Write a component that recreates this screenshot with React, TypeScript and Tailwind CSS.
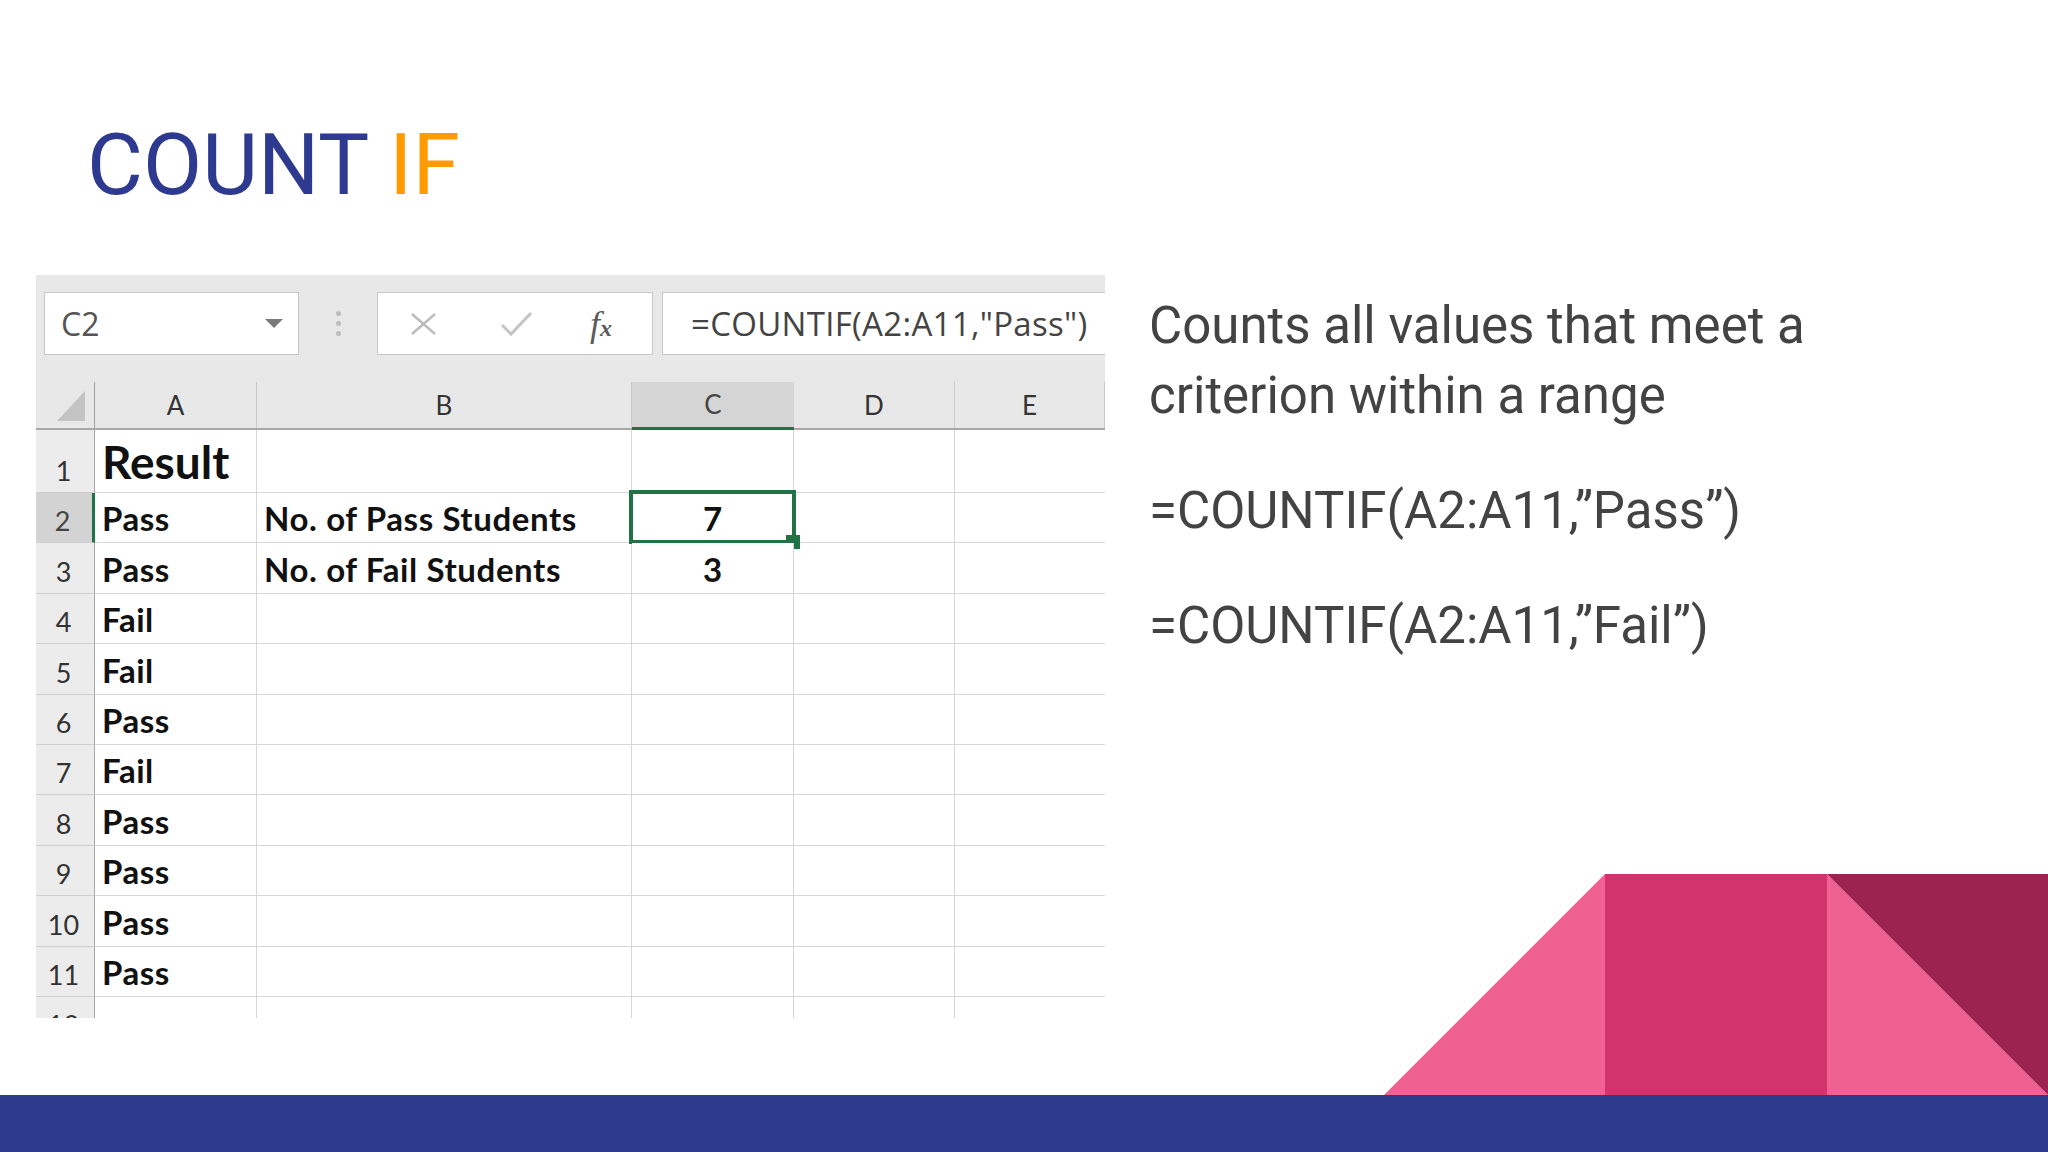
import React from 'react';

const rows = [
  { n: '1', a: 'Result', b: '', c: '', tall: true },
  { n: '2', a: 'Pass', b: 'No. of Pass Students', c: '7', sel: true },
  { n: '3', a: 'Pass', b: 'No. of Fail Students', c: '3' },
  { n: '4', a: 'Fail', b: '', c: '' },
  { n: '5', a: 'Fail', b: '', c: '' },
  { n: '6', a: 'Pass', b: '', c: '' },
  { n: '7', a: 'Fail', b: '', c: '' },
  { n: '8', a: 'Pass', b: '', c: '' },
  { n: '9', a: 'Pass', b: '', c: '' },
  { n: '10', a: 'Pass', b: '', c: '' },
  { n: '11', a: 'Pass', b: '', c: '' },
  { n: '12', a: '', b: '', c: '' },
];

const cols = 'grid grid-cols-[59px_162px_375px_162px_161px_150px]';

function Toolbar() {
  return (
    <div className="h-[107px] shrink-0 flex items-start pt-[17px] pl-[8px]">
      <div className="shrink-0 w-[255px] h-[63px] bg-white border border-[#c6c6c6] flex items-center justify-between pl-[16px] pr-[15px]">
        <span className="text-[32px] text-[#555] font-['Open_Sans',sans-serif] leading-none">C2</span>
        <svg width="18" height="9" viewBox="0 0 18 9">
          <polygon points="0,0 18,0 9,9" fill="#7a7a7a" />
        </svg>
      </div>
      <div className="shrink-0 w-[78px] h-[63px] flex flex-col items-center justify-center gap-[5px]">
        <div className="w-[5px] h-[5px] rounded-full bg-[#bdbdbd]" />
        <div className="w-[5px] h-[5px] rounded-full bg-[#bdbdbd]" />
        <div className="w-[5px] h-[5px] rounded-full bg-[#bdbdbd]" />
      </div>
      <div className="shrink-0 w-[276px] h-[63px] bg-white border border-[#c6c6c6] flex items-center pl-[32px]">
        <svg width="27" height="24" viewBox="0 0 27 24">
          <line x1="2" y1="2" x2="25" y2="22" stroke="#bcbcbc" strokeWidth="2.5" />
          <line x1="25" y1="2" x2="2" y2="22" stroke="#bcbcbc" strokeWidth="2.5" />
        </svg>
        <svg width="33" height="26" viewBox="0 0 33 26" className="ml-[63px]">
          <polyline points="2,14 11,23 31,2" fill="none" stroke="#c4c4c4" strokeWidth="3" />
        </svg>
        <span className="ml-[57px] font-['Liberation_Serif',serif] italic text-[#5a5a5a] text-[36px] leading-none">
          f<span className="text-[24px] font-semibold">x</span>
        </span>
      </div>
      <div className="shrink-0 ml-[9px] w-[470px] h-[63px] bg-white border border-[#c6c6c6] flex items-center pl-[28px]">
        <span className="text-[33px] tracking-[0.3px] text-[#444] font-['Open_Sans',sans-serif] leading-none whitespace-nowrap">
          =COUNTIF(A2:A11,"Pass")
        </span>
      </div>
    </div>
  );
}

function HeaderRow() {
  const letters = ['A', 'B', 'C', 'D', 'E'];
  return (
    <div className={`${cols} h-[48px] shrink-0 border-b-2 border-[#a8a8a8]`}>
      <div className="border-r border-[#a0a0a0] flex items-end justify-end pr-[9px] pb-[7px]">
        <svg width="28" height="30" viewBox="0 0 28 30">
          <polygon points="28,0 28,30 0,30" fill="#c4c4c4" />
        </svg>
      </div>
      {letters.map((l) => (
        <div
          key={l}
          className={
            l === 'C'
              ? 'bg-[#d5d5d5] border-b-[3px] -mb-[2px] border-[#217346] flex items-center justify-center text-[26px] text-[#444]'
              : 'border-r border-[#c9c9c9] flex items-center justify-center text-[26px] text-[#333]'
          }
        >
          {l}
        </div>
      ))}
    </div>
  );
}

function Sheet() {
  return (
    <div className="w-[1069px] h-[743px] shrink-0 overflow-hidden bg-[#e8e8e8] flex flex-col font-['Lato',sans-serif]">
      <Toolbar />
      <HeaderRow />
      {rows.map((r) => (
        <div key={r.n} className={`${cols} shrink-0 ${r.tall ? 'h-[63px]' : 'h-[50.4px]'}`}>
          <div
            className={
              r.sel
                ? 'bg-[#d3d3d3] border-r-[3px] border-r-[#217346] border-b border-b-[#cfcfcf] flex items-end justify-center pr-[3px] pb-[8px] text-[27px] text-[#444] leading-none'
                : 'bg-[#ececec] border-r border-r-[#a8a8a8] border-b border-b-[#cfcfcf] flex items-end justify-center pr-[3px] pb-[8px] text-[27px] text-[#333] leading-none'
            }
          >
            {r.n}
          </div>
          <div className="bg-white border-r border-b border-[#d6d6d6] flex items-end pl-[7px] pb-[7px] leading-none text-[#111] font-bold">
            <span className={r.tall ? 'text-[46px]' : 'text-[33px] tracking-[0.5px]'}>{r.a}</span>
          </div>
          <div className="bg-white border-r border-b border-[#d6d6d6] flex items-end pl-[7px] pb-[7px] leading-none text-[33px] tracking-[0.6px] text-[#111] font-bold whitespace-nowrap">
            {r.b}
          </div>
          <div className="relative bg-white border-r border-b border-[#d6d6d6] flex items-end justify-center pb-[7px] leading-none text-[33px] text-[#111] font-bold">
            {r.c}
            {r.sel && (
              <>
                <div className="absolute -left-[3px] -top-[3px] -right-[3px] -bottom-[2px] border-[4px] border-[#217346]" />
                <div className="absolute -right-[7px] -bottom-[7px] w-[14px] h-[14px] bg-[#217346]" />
              </>
            )}
          </div>
          <div className="bg-white border-r border-b border-[#d6d6d6]" />
          <div className="bg-white border-b border-[#d6d6d6]" />
        </div>
      ))}
    </div>
  );
}

export default function App() {
  return (
    <div className="relative w-[2048px] h-[1152px] bg-white overflow-hidden flex flex-col font-['Roboto',sans-serif]">
      <h1 className="pt-[122px] pl-[87px] text-[86px] leading-none font-normal text-[#2e3a8f]">
        COUNT <span className="text-[#ff9a00]">IF</span>
      </h1>

      <div className="flex items-start mt-[67px] pl-[36px]">
        <Sheet />
        <div className="ml-[44px] mt-[16px] w-[720px] flex flex-col gap-[45px] text-[51px] leading-[70px] text-[#434343]">
          <p>Counts all values that meet a criterion within a range</p>
          <p>=COUNTIF(A2:A11,”Pass”)</p>
          <p>=COUNTIF(A2:A11,”Fail”)</p>
        </div>
      </div>

      <div className="mt-auto relative h-[57px] bg-[#2e3a8c]">
        <svg
          className="absolute right-0 bottom-[57px]"
          width="664"
          height="221"
          viewBox="0 0 664 221"
        >
          <polygon points="0,221 221,0 221,221" fill="#ef6190" />
          <rect x="221" y="0" width="222" height="221" fill="#d3336b" />
          <polygon points="443,0 664,221 443,221" fill="#ef6190" />
          <polygon points="443,0 664,0 664,221" fill="#9c2250" />
        </svg>
      </div>
    </div>
  );
}
